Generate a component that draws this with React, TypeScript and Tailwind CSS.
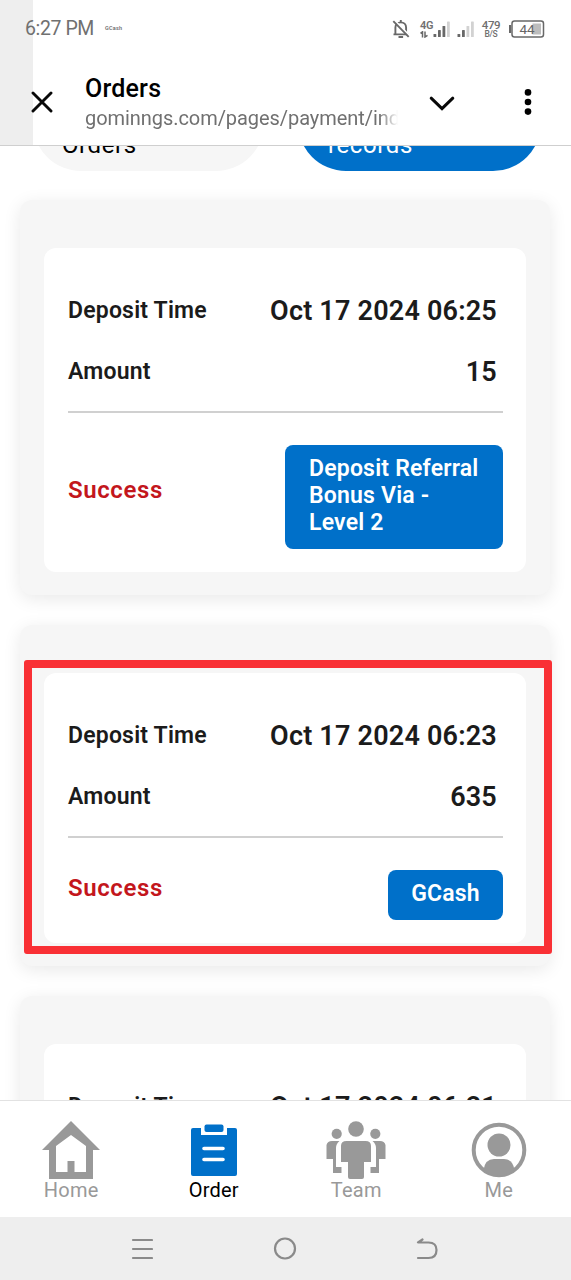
import React from "react";

type Deposit = { time: string; amount: string; method: string; wide?: boolean; highlighted?: boolean };

const deposits: Deposit[] = [
  { time: "Oct 17 2024 06:25", amount: "15", method: "Deposit Referral Bonus Via - Level 2", wide: true },
  { time: "Oct 17 2024 06:23", amount: "635", method: "GCash", highlighted: true },
  { time: "Oct 17 2024 06:21", amount: "", method: "" },
];

function Signal({ strong }: { strong: number }) {
  return (
    <svg width="17" height="17" viewBox="0 0 17 17" className="shrink-0">
      {[0, 1, 2, 3].map((i) => (
        <rect
          key={i}
          x={0.5 + i * 4.5}
          y={[13, 9, 5, 0.5][i]}
          width="2.8"
          height={[3, 7, 11, 15.5][i]}
          rx="0.6"
          fill={i < strong ? "#686868" : "#d2d2d2"}
        />
      ))}
    </svg>
  );
}

function StatusBar() {
  return (
    <div className="flex h-[58px] items-center pl-[25px] pr-[26px] text-[#707070]">
      <span className="w-[80px] text-[19.5px] leading-6 tracking-[-0.4px] whitespace-nowrap">6:27 PM</span>
      <span className="text-[5.5px] leading-none font-medium tracking-[0.2px] text-[#666]">GCash</span>
      <div className="ml-auto flex items-center">
        <svg width="18" height="20" viewBox="0 0 18 20" fill="none" stroke="#686868" strokeWidth="1.9">
          <path d="M3.4 15V8.6C3.4 5.4 5.8 3.400 8.8 3.400s5.3 2 5.3 5.200V15M1.500 15.400h15M8.800 3.400V1M6.500 18h4.600" />
          <path d="M2.300 1.200l15.400 15.600" stroke="#fff" strokeWidth="2" />
          <path d="M1.300 2.200l15.400 15.600" />
        </svg>
        <div className="ml-[10px] flex w-[13px] flex-col items-start">
          <span className="text-[11px] leading-[10px] font-semibold tracking-[-0.4px]">4G</span>
          <svg width="9" height="7" viewBox="0 0 9 7" stroke="#686868" strokeWidth="1.5" fill="none">
            <path d="M0.500 2.300L2.500 0.800V6.500M5 0.500V6L7.500 4.300" />
          </svg>
        </div>
        <Signal strong={3} />
        <div className="w-[7px]" />
        <Signal strong={2} />
        <div className="ml-[7px] flex w-[20px] flex-col items-center">
          <span className="text-[11.5px] leading-[10px] font-medium tracking-[-0.3px]">479</span>
          <span className="text-[8.5px] leading-[9px] font-medium tracking-[-0.3px]">B/S</span>
        </div>
        <svg width="36" height="18" viewBox="0 0 36 18" className="ml-[8px]">
          <rect x="0" y="5" width="2.2" height="8" fill="#686868" />
          <rect x="3" y="1" width="31.500" height="16" rx="2.500" fill="none" stroke="#686868" strokeWidth="1.500" />
          <rect x="23.500" y="3.500" width="8.500" height="11" fill="#bdbdbd" />
          <text x="10.500" y="13.800" fontSize="13.500" fill="#666">44</text>
        </svg>
      </div>
    </div>
  );
}

function BrowserBar() {
  return (
    <div className="flex h-[87px] items-center pl-[31px] pr-[39px]">
      <svg width="22" height="22" viewBox="0 0 22 22" stroke="#080808" strokeWidth="2.9" strokeLinecap="round">
        <path d="M2 2L20 20M20 2L2 20" />
      </svg>
      <div className="ml-[32px] flex w-[313px] flex-col pt-[3px]">
        <span className="text-[25px] leading-[30px] font-medium tracking-[0.2px] text-black">Orders</span>
        <span className="overflow-hidden text-[20px] leading-[28px] tracking-[-0.06px] whitespace-nowrap text-[#707070] [mask-image:linear-gradient(to_right,black_94%,transparent)]">
          gominngs.com/pages/payment/index
        </span>
      </div>
      <svg width="26" height="16" viewBox="0 0 26 16" fill="none" stroke="#080808" strokeWidth="3" strokeLinecap="round" className="ml-[31px] mt-[5px]">
        <path d="M2.2 2.2L13 12.7L23.8 2.2" />
      </svg>
      <svg width="8" height="28" viewBox="0 0 8 28" className="ml-auto">
        <circle cx="4" cy="4.4" r="3.3" />
        <circle cx="4" cy="14" r="3.3" />
        <circle cx="4" cy="23.6" r="3.3" />
      </svg>
    </div>
  );
}

function DepositCard({ item }: { item: Deposit }) {
  return (
    <section className="relative rounded-[12px] bg-[#f6f6f6] px-6 pt-12 pb-[23px] shadow-[0_4px_18px_rgba(0,0,0,0.09)]">
      <div className="rounded-[12px] bg-white pt-[33px] pr-[23px] pb-[23px] pl-6">
        <div className="flex h-[61px] items-center justify-between pr-[6px]">
          <span className="text-[23px] font-semibold tracking-[0.2px] whitespace-nowrap">Deposit Time</span>
          <span className="text-[27px] font-semibold tracking-[0.2px] whitespace-nowrap">{item.time}</span>
        </div>
        <div className="flex h-[60px] items-center justify-between pr-[6px]">
          <span className="text-[23px] font-semibold tracking-[0.2px]">Amount</span>
          <span className="text-[27px] font-semibold tracking-[0.2px]">{item.amount}</span>
        </div>
        <div className="mt-[9px] h-[2px] bg-[#d0d0d0]" />
        {item.method && (
          <div className="mt-8 flex items-center justify-between text-[23px] leading-[27px] font-semibold">
            <span className="pb-[13px] text-[24px] tracking-[0.6px] text-[#c3161c]">Success</span>
            <span
              className={
                item.wide
                  ? "h-[104px] w-[218px] rounded-[8px] bg-[#0070c9] pt-[10px] pr-[18px] pl-[24px] tracking-[0.2px] text-white"
                  : "h-[50px] w-[115px] rounded-[8px] bg-[#0070c9] pt-[10px] text-center tracking-[0.2px] text-white"
              }
            >
              {item.method}
            </span>
          </div>
        )}
      </div>
      {item.highlighted && (
        <div className="pointer-events-none absolute top-[35px] -right-[2px] bottom-[12px] left-[4px] rounded-[3px] border-8 border-[#f93035]" />
      )}
    </section>
  );
}

function HomeIcon() {
  return (
    <svg width="58" height="58" viewBox="0 0 58 58" fill="#999">
      <path fillRule="evenodd" d="M29 0L58 29H51V58H7V29H0ZM29 14L14 25V51H25.500V40H32.500V51H44V25Z" />
    </svg>
  );
}

function OrderIcon() {
  return (
    <svg width="46" height="52" viewBox="0 0 46 52" fill="#0070c9">
      <path d="M2 4H10V11H36V4H44Q46 4 46 6V50Q46 52 44 52H2Q0 52 0 50V6Q0 4 2 4Z" />
      <rect x="13.500" y="0.500" width="19" height="7.500" rx="2" />
      <path d="M13 24.500H32M13 35.500H32" stroke="#fff" strokeWidth="3.600" strokeLinecap="round" />
    </svg>
  );
}

function TeamIcon() {
  return (
    <svg width="60" height="58" viewBox="0 0 60 58" fill="#999">
      <circle cx="30" cy="8" r="7.800" />
      <circle cx="10.700" cy="12.800" r="5.100" />
      <circle cx="49.300" cy="12.800" r="5.100" />
      <path d="M20.500 20H39.500Q45 20 45 25V41H38V56Q38 58 36 58H24Q22 58 22 56V41H15V25Q15 20 20.500 20Z" />
      <path d="M6 20H13.500Q10 23 10 27V46H15.500V52H7V38H.500V24Q1.500 20 6 20Z" />
      <path d="M54 20H46.500Q50 23 50 27V46H44.500V52H53V38H59.500V24Q58.500 20 54 20Z" />
    </svg>
  );
}

function MeIcon() {
  return (
    <svg width="56" height="56" viewBox="0 0 56 56">
      <circle cx="28" cy="28" r="25.300" fill="none" stroke="#999" strokeWidth="4" />
      <circle cx="28" cy="23" r="11.500" fill="#999" />
      <path d="M12.500 48Q14 37 23 37H33Q42 37 43.500 48Q28 59 12.500 48Z" fill="#999" />
    </svg>
  );
}

const tabs = [
  { label: "Home", icon: <HomeIcon /> },
  { label: "Order", icon: <OrderIcon />, active: true },
  { label: "Team", icon: <TeamIcon /> },
  { label: "Me", icon: <MeIcon /> },
];

export default function App() {
  return (
    <div className="flex h-[1280px] w-[571px] flex-col overflow-hidden bg-white font-[Roboto,sans-serif] text-[#1b1b1b]">
      <header className="h-[146px] shrink-0 border-b border-[#cfcfcf] bg-[linear-gradient(to_right,#eeeeee_33px,#ffffff_33px)]">
        <StatusBar />
        <BrowserBar />
      </header>
      <main className="min-h-0 flex-1 overflow-hidden px-5">
        <div className="-mt-[71px] flex justify-between pr-[10px] pl-[13px] text-[24px] leading-[28px] tracking-[0.6px]">
          <div className="flex h-[96px] w-[231px] items-end rounded-full bg-[#f6f6f6] pb-[12px] pl-[29px] text-black">Orders</div>
          <div className="flex h-[96px] w-[243px] items-end rounded-full bg-[#0070c9] pb-[12px] pl-[30px] text-white">records</div>
        </div>
        <div className="mt-[29px] flex flex-col gap-[30px] pr-[1px]">
          {deposits.map((d) => (
            <DepositCard key={d.time} item={d} />
          ))}
        </div>
      </main>
      <nav className="grid h-[117px] shrink-0 grid-cols-4 border-t border-[#e2e2e2] bg-white pr-px">
        {tabs.map((t) => (
          <div key={t.label} className="flex flex-col items-center pt-[20px]">
            <div className="flex h-[58px] items-center">{t.icon}</div>
            <span
              className={
                t.active
                  ? "text-[20px] leading-[23px] tracking-[0.2px] text-black"
                  : "text-[20px] leading-[23px] tracking-[0.3px] text-[#999]"
              }
            >
              {t.label}
            </span>
          </div>
        ))}
      </nav>
      <footer className="flex h-[63px] shrink-0 items-center justify-between bg-[#eeeeee] pr-[133px] pl-[131px]">
        <svg width="22" height="22" viewBox="0 0 22 22" stroke="#8a8a8a" strokeWidth="2.2" strokeLinecap="round">
          <path d="M2 2H21M2 11H21M2 20H21" />
        </svg>
        <svg width="24" height="24" viewBox="0 0 24 24" fill="none" stroke="#8a8a8a" strokeWidth="2.2">
          <circle cx="12" cy="11.500" r="10" />
        </svg>
        <svg width="22" height="22" viewBox="0 0 22 22" fill="none" stroke="#8a8a8a" strokeWidth="2.200" strokeLinecap="round" strokeLinejoin="round">
          <path d="M6.500 1.500L2 4.500H12.500Q20.500 4.500 20.500 12Q20.500 20 12.500 20H2" />
        </svg>
      </footer>
    </div>
  );
}
